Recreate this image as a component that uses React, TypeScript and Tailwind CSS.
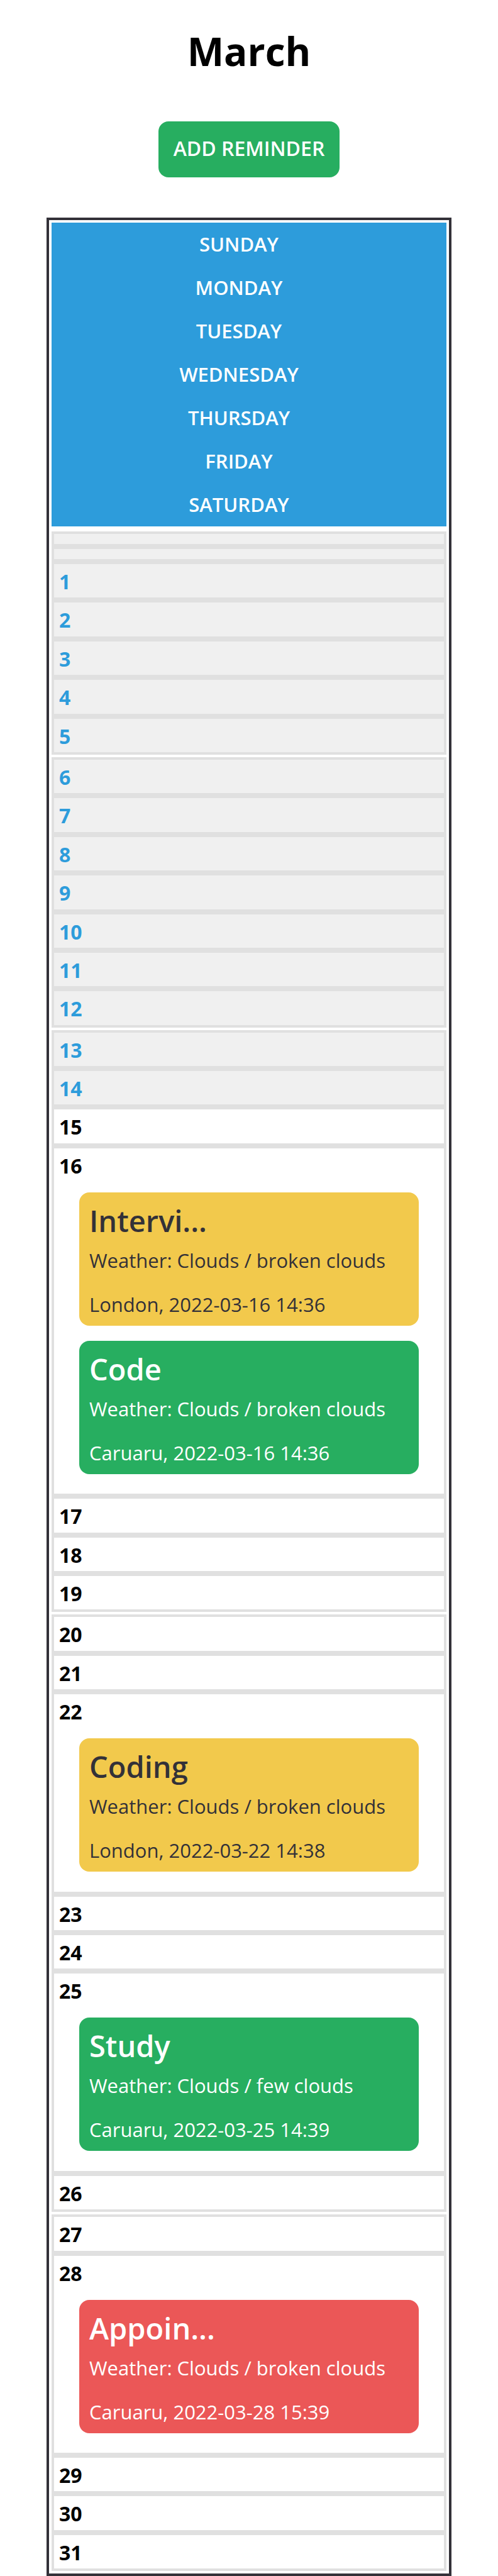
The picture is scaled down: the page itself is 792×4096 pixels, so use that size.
type Tone = "yellow" | "green" | "red";

interface Reminder {
  title: string;
  weather: string;
  place: string;
  tone: Tone;
}

const WEEKDAYS = ["SUNDAY", "MONDAY", "TUESDAY", "WEDNESDAY", "THURSDAY", "FRIDAY", "SATURDAY"];

const TODAY = 15;
const DAYS_IN_MONTH = 31;
const LEADING_BLANKS = 2;

const REMINDERS: Record<number, Reminder[]> = {
  16: [
    { title: "Intervi...", weather: "Clouds / broken clouds", place: "London, 2022-03-16 14:36", tone: "yellow" },
    { title: "Code", weather: "Clouds / broken clouds", place: "Caruaru, 2022-03-16 14:36", tone: "green" },
  ],
  22: [{ title: "Coding", weather: "Clouds / broken clouds", place: "London, 2022-03-22 14:38", tone: "yellow" }],
  25: [{ title: "Study", weather: "Clouds / few clouds", place: "Caruaru, 2022-03-25 14:39", tone: "green" }],
  28: [{ title: "Appoin...", weather: "Clouds / broken clouds", place: "Caruaru, 2022-03-28 15:39", tone: "red" }],
};

const TONES: Record<Tone, string> = {
  yellow: "bg-[#f2c94c] text-[#333138]",
  green: "bg-[#27ae60] text-white",
  red: "bg-[#eb5757] text-white",
};

function ReminderCard({ reminder }: { reminder: Reminder }) {
  return (
    <li className={`rounded-2xl px-4 py-3 ${TONES[reminder.tone]}`}>
      <h2 className="mb-2 text-[47px] leading-[66px] font-semibold">{reminder.title}</h2>
      <p className="mb-[26px] text-[31px] leading-[44px]">Weather: {reminder.weather}</p>
      <p className="text-[31px] leading-[44px]">{reminder.place}</p>
    </li>
  );
}

function DayCell({ day }: { day: number }) {
  const reminders = REMINDERS[day] ?? [];
  const past = day < TODAY;
  const startsWeek = (day + LEADING_BLANKS) % 7 === 1;
  return (
    <li
      className={`shrink-0 grow border-4 border-[#e0e0e0] px-2 pt-[3px] ${startsWeek ? "mt-1" : ""} ${
        past ? "bg-[#f0f0f0] text-[#2d9cdb]" : "bg-white text-black"
      }`}
    >
      <span className="block text-[32px] leading-[49px] font-bold">{day}</span>
      {reminders.length > 0 && (
        <ul className="flex flex-col gap-6 px-8 pt-[18px] pb-[30px]">
          {reminders.map((r) => (
            <ReminderCard key={r.place} reminder={r} />
          ))}
        </ul>
      )}
    </li>
  );
}

export default function App() {
  return (
    <main className="flex min-h-screen flex-col bg-white px-[74px] pt-[35px] font-['Open_Sans','Noto_Sans',sans-serif]">
      <h1 className="text-center text-[62px] leading-[92px] font-bold text-black">March</h1>
      <button
        type="button"
        className="mt-[66px] mb-16 cursor-pointer self-center rounded-2xl bg-[#27ae60] px-6 pt-[18px] pb-[22px] text-[32px] leading-[49px] font-semibold text-white"
      >
        ADD REMINDER
      </button>
      <section className="flex grow flex-col border-4 border-[#333138] p-1">
        <ul className="mb-2 bg-[#2d9cdb] pr-8 text-center text-[31px] leading-[69px] font-semibold text-white">
          {WEEKDAYS.map((name) => (
            <li key={name}>{name}</li>
          ))}
        </ul>
        <ol className="flex grow flex-col">
          {Array.from({ length: LEADING_BLANKS }, (_, i) => (
            <li key={`blank-${i}`} className="h-6 shrink-0 border-4 border-[#e0e0e0] bg-[#f0f0f0]" />
          ))}
          {Array.from({ length: DAYS_IN_MONTH }, (_, i) => (
            <DayCell key={i + 1} day={i + 1} />
          ))}
        </ol>
      </section>
    </main>
  );
}
